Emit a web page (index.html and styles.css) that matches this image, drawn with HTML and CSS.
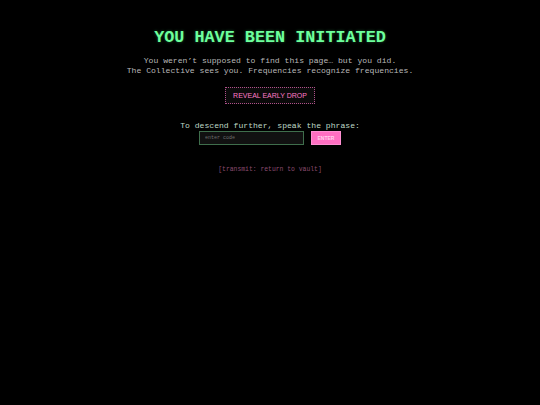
FILE: index.html
```html
<!DOCTYPE html>
<html>
<head>
<meta charset="utf-8">
<link rel="stylesheet" href="styles.css">
</head>
<body>
<main class="page">
  <h1 class="title">YOU HAVE BEEN INITIATED</h1>
  <p class="lead">You weren’t supposed to find this page… but you did.<br>The Collective sees you. Frequencies recognize frequencies.</p>
  <button class="reveal">REVEAL EARLY DROP</button>
  <p class="prompt">To descend further, speak the phrase:</p>
  <div class="form">
    <input class="code" type="text" placeholder="enter code">
    <button class="enter">ENTER</button>
  </div>
  <p class="transmit">[transmit: return to vault]</p>
</main>
</body>
</html>
```
FILE: styles.css
```css
html, body {
  margin: 0;
  padding: 0;
  background: #000;
}
body {
  width: 540px;
  height: 405px;
  font-family: "Courier New", Courier, "Nimbus Mono PS", "Nimbus Mono L", FreeMono, "Liberation Mono", monospace;
  color: #cfcfcf;
}
.page {
  display: flex;
  flex-direction: column;
  align-items: center;
  text-align: center;
  padding-top: 28px;
}
.title {
  margin: 0;
  font-size: 16.8px;
  line-height: 20px;
  font-weight: bold;
  color: #6dff9c;
  text-shadow: 0 0 3px rgba(80, 255, 140, 0.35);
}
.lead {
  margin: 8px 0 0;
  font-size: 8.1px;
  line-height: 9.5px;
  color: #b9b9b9;
}
.reveal {
  margin-top: 12px;
  width: 90px;
  height: 17px;
  padding: 0;
  background: #0a0a0a;
  border: 1px dotted #b0508a;
  color: #ff7ac8;
  font-family: "Liberation Sans", Arial, sans-serif;
  font-size: 7px;
  letter-spacing: 0;
}
.prompt {
  margin: 17px 0 0;
  font-size: 8.1px;
  line-height: 10px;
  color: #bfd8c6;
}
.form {
  display: flex;
  align-items: center;
  gap: 7px;
  margin-top: 0;
}
.code {
  box-sizing: border-box;
  width: 105px;
  height: 14px;
  padding: 0 5px;
  background: #111;
  border: 1px solid #3f6e4c;
  color: #ccc;
  font-family: inherit;
  font-size: 5px;
  outline: none;
}
.code::placeholder {
  color: #6f6f6f;
}
.enter {
  box-sizing: border-box;
  width: 30px;
  height: 14px;
  padding: 0;
  background: #ff6fc2;
  border: 1px solid #ff8fd2;
  color: #ffd0ea;
  font-family: "Liberation Sans", Arial, sans-serif;
  font-size: 5px;
  font-weight: bold;
}
.transmit {
  margin: 21px 0 0;
  font-size: 6.4px;
  line-height: 8px;
  color: #8c4c70;
}
```
